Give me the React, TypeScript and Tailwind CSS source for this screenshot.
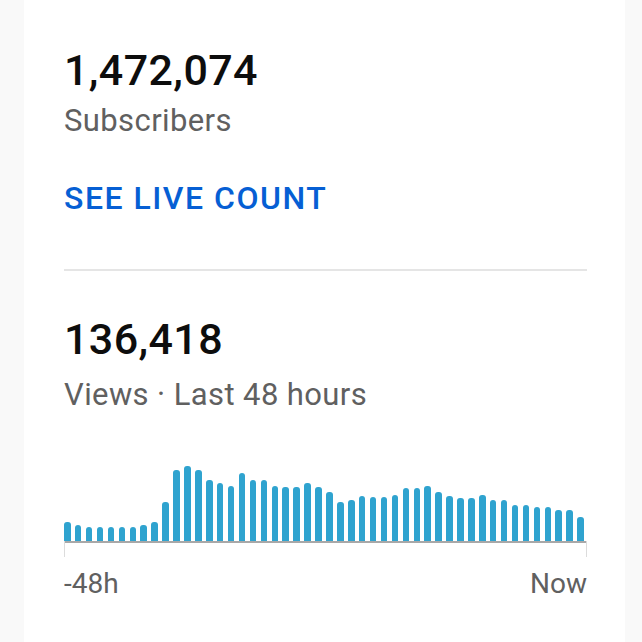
const viewsByHour = [
  19, 16, 14, 14, 14, 14, 14, 16, 19, 39, 71, 75, 71, 61, 58, 55, 68, 61, 61, 55, 54, 54, 58, 54,
  49, 39, 41, 45, 44, 44, 46, 53, 53, 55, 49, 45, 43, 43, 46, 41, 41, 36, 36, 34, 34, 31, 31, 24,
];

function ViewsChart() {
  return (
    <div className="mt-[48px]">
      <div className="flex h-[80px] items-end gap-[4.4px] pr-[3px]">
        {viewsByHour.map((h, i) => (
          <div
            key={i}
            className="flex-1 rounded-t-[3px] bg-[#2fa3cf]"
            style={{ height: h }}
          />
        ))}
      </div>
      <div className="relative h-[2px] bg-[#a8a8a8]">
        <div className="absolute left-0 top-0 h-[16px] w-px bg-[#dcdcdc]" />
        <div className="absolute right-0 top-0 h-[16px] w-px bg-[#dcdcdc]" />
      </div>
      <div className="mt-[24px] flex justify-between text-[28px] leading-[34px] text-[#606060]">
        <span>-48h</span>
        <span>Now</span>
      </div>
    </div>
  );
}

export default function App() {
  return (
    <div className="flex h-[642px] w-[642px] bg-[#f9f9f9] pl-[24px] font-['Roboto',sans-serif]">
      <div className="h-full w-[601px] bg-white pl-[40px] pr-[38px]">
        <p className="mt-[46px] text-[43px] leading-[48px] font-medium tracking-[0.4px] text-[#0d0d0d]">1,472,074</p>
        <p className="mt-[9px] text-[31px] leading-[36px] tracking-[0.4px] text-[#606060]">Subscribers</p>
        <button type="button" className="mt-[41px] block text-[32px] leading-[36px] font-medium tracking-[1.5px] text-[#065fd4]">
          SEE LIVE COUNT
        </button>

        <div className="mt-[53px] h-[2px] bg-[#e5e5e5]" />

        <p className="mt-[44px] text-[43px] leading-[48px] font-medium tracking-[0.4px] text-[#0d0d0d]">136,418</p>
        <p className="mt-[14px] text-[31px] leading-[36px] tracking-[0.4px] text-[#606060]">Views · Last 48 hours</p>

        <ViewsChart />
      </div>
    </div>
  );
}
